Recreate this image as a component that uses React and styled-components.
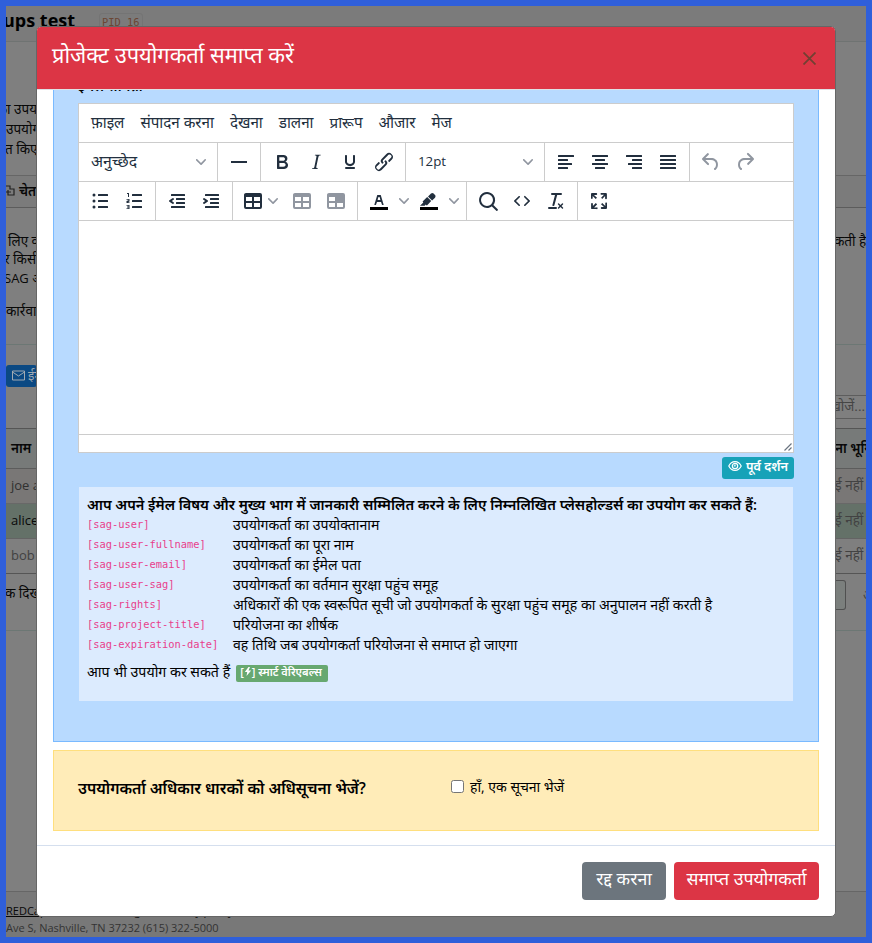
import React from "react";
import styled, { createGlobalStyle } from "styled-components";

const Global = createGlobalStyle`
  * { box-sizing: border-box; }
  svg { flex: none; }
  body { margin: 0; font-family: "Open Sans", "Noto Sans", "Noto Sans Devanagari", sans-serif; font-size: 13px; color: #000; }
`;

const Screen = styled.div`
  position: relative;
  width: 872px;
  height: 943px;
  border: 6px solid #2f5fda;
  background: #7f7f7f;
  overflow: hidden;
`;

/* ---------- page behind the dialog ---------- */
const Page = styled.div`
  display: flex;
  flex-direction: column;
  height: 931px;
`;
const Band = styled.div`
  display: flex;
  flex: none;
  justify-content: space-between;
  align-items: ${(p) => p.$align || "center"};
  height: ${(p) => p.$h}px;
  background: ${(p) => p.$bg || "transparent"};
  border-bottom: ${(p) => (p.$line ? `1px solid ${p.$line}` : "0")};
  white-space: nowrap;
`;
const Clip = styled.div`
  display: flex;
  justify-content: ${(p) => (p.$end ? "flex-end" : "flex-start")};
  align-items: center;
  gap: 4px;
  width: 31px;
  height: 100%;
  padding-left: ${(p) => p.$pad || 0}px;
  padding-bottom: ${(p) => p.$lift || 0}px;
  overflow: hidden;
  text-indent: ${(p) => p.$indent || 0}px;
  color: ${(p) => p.$color || "#080808"};
  font-size: ${(p) => p.$size || 13.5}px;
  font-weight: ${(p) => (p.$bold ? 600 : 400)};
`;
const PageTitle = styled.div`
  display: flex;
  align-items: center;
  gap: 24px;
  margin-left: -3px;
  font-size: 18px;
  font-weight: 700;
  line-height: 29px;
`;
const Pid = styled.span`
  margin-top: 3px;
  padding: 0 2px;
  border: 1px solid #747474;
  border-radius: 3px;
  color: #6b4634;
  font: 10.4px/16px "DejaVu Sans Mono", monospace;
`;
const MailButton = styled.div`
  display: flex;
  align-items: center;
  gap: 3px;
  width: 31px;
  height: 22px;
  padding: 0 0 2px 6px;
  overflow: hidden;
  border-radius: 3px;
  background: #0b4983;
  color: #a1aab2;
  font-size: 13px;
`;
const SearchBox = styled.div`
  display: flex;
  justify-content: flex-end;
  align-items: center;
  width: 31px;
  height: 24px;
  padding: 0 1px 3px 0;
  overflow: hidden;
  border: 1px solid #5d5d5d;
  border-width: 1px 0;
  color: #454545;
  font-size: 13.5px;
`;
const PagerCell = styled.div`
  flex: none;
  width: 11px;
  height: 30px;
  margin-right: 13px;
  border: 1px solid #505050;
  border-left: 0;
  border-radius: 0 3px 3px 0;
  background: #7b7f7d;
`;
const PageFooter = styled.div`
  flex: 1;
  padding-top: 10px;
  border-top: 1px solid #666;
  background: #787878;
  font-size: 11px;
  line-height: 17px;
  color: #333;
`;
const FooterLinks = styled.div`
  display: flex;
  gap: 18px;
  color: #080808;
  text-decoration: underline;
  white-space: nowrap;
`;

/* ---------- dialog ---------- */
const Dialog = styled.div`
  position: absolute;
  left: 30px;
  top: 20px;
  width: 800px;
  height: 891px;
  display: flex;
  flex-direction: column;
  border: 1px solid #666;
  border-radius: 5px;
  background: #fff;
  overflow: hidden;
`;
const DialogHeader = styled.div`
  display: flex;
  flex: none;
  justify-content: space-between;
  align-items: center;
  height: 63px;
  padding: 0 19px 0 15px;
  border-bottom: 1px solid #dee2e6;
  background: #dc3545;
  color: #fff;
`;
const DialogTitle = styled.div`
  margin-top: -7px;
  font-size: 21.8px;
  line-height: 30px;
`;
const DialogBody = styled.div`
  flex: none;
  height: 755px;
  padding: 0 16px;
  overflow: hidden;
`;
const BluePanel = styled.div`
  height: 652px;
  padding: 0 25px 0 24px;
  border: 1px solid #7abaff;
  border-top: 0;
  background: #b8daff;
`;
const CutLabel = styled.div`
  height: 13px;
  overflow: hidden;
  font-weight: 600;
  line-height: 20px;
`;
const CutLabelText = styled.div`
  margin-top: -14px;
  font-size: 14px;
`;
const Editor = styled.div`
  display: flex;
  flex-direction: column;
  width: 716px;
  height: 350px;
  border: 1px solid #ccc;
  background: #fff;
  color: #222f3e;
`;
const MenuBar = styled.div`
  display: flex;
  flex: none;
  align-items: center;
  gap: 16px;
  height: 38px;
  padding: 0 0 3px 12px;
  font-size: 15.2px;
`;
const ToolRow = styled.div`
  display: flex;
  flex: none;
  height: 39px;
  border-top: 1px solid #ccc;
`;
const ToolGroup = styled.div`
  display: flex;
  align-items: center;
  padding: 0 4px;
  border-right: ${(p) => (p.$last ? 0 : 1)}px solid #ccc;
`;
const ToolButton = styled.div`
  display: flex;
  align-items: center;
  justify-content: center;
  width: ${(p) => p.$w || 34}px;
  height: 34px;
  color: ${(p) => (p.$off ? "#9096a0" : "#222f3e")};
`;
const SplitButton = styled(ToolButton)`
  justify-content: flex-start;
  gap: 3px;
  width: 48px;
  padding-left: 4px;
`;
const Select = styled.div`
  display: flex;
  align-items: center;
  justify-content: space-between;
  width: 130px;
  padding: 0 7px 0 8px;
  font-size: ${(p) => p.$size}px;
  span { margin-top: -2px; }
`;
const EditArea = styled.div`
  flex: 1;
  border-top: 1px solid #ccc;
`;
const StatusBar = styled.div`
  display: flex;
  justify-content: flex-end;
  align-items: flex-end;
  height: 18px;
  border-top: 1px solid #ccc;
  color: #6a7480;
`;
const PreviewRow = styled.div`
  display: flex;
  justify-content: flex-end;
  width: 716px;
  height: 34px;
  padding-top: 4px;
`;
const PreviewButton = styled.div`
  display: flex;
  justify-content: center;
  gap: 4px;
  width: 72px;
  height: 22px;
  border-radius: 3px;
  background: #17a2b8;
  color: #fff;
  font-size: 12.7px;
  font-weight: 600;
  line-height: 18px;
  white-space: nowrap;
  svg { margin-top: 3px; }
`;
const HintBox = styled.div`
  width: 714px;
  height: 214px;
  margin-left: 1px;
  padding: 8px 8px;
  background: #dcebfe;
  white-space: nowrap;
`;
const HintTitle = styled.div`
  font-size: 14.47px;
  font-weight: 600;
  line-height: 20px;
`;
const HintRow = styled.div`
  display: grid;
  grid-template-columns: 146px 1fr;
  height: 20px;
  line-height: 20px;
  font-size: 14.08px;
`;
const Code = styled.span`
  color: #e83e8c;
  font: 10.4px/19px "DejaVu Sans Mono", monospace;
`;
const SmartRow = styled.div`
  display: flex;
  align-items: center;
  gap: 6px;
  height: 20px;
  margin-top: 6px;
  font-size: 14.2px;
`;
const SmartBadge = styled.span`
  display: flex;
  align-items: center;
  width: 92px;
  height: 17px;
  margin-top: 4px;
  padding: 0 4px 3px;
  border-radius: 2px;
  background: #67a870;
  color: #fff;
  font-size: 11px;
  font-weight: 600;
  white-space: nowrap;
`;
const YellowPanel = styled.div`
  display: flex;
  align-items: center;
  height: 81px;
  margin-top: 8px;
  padding: 0 24px 8px;
  border: 1px solid #ffdf7e;
  background: #ffecb8;
  font-size: 14px;
  white-space: nowrap;
`;
const Question = styled.div`
  width: 373px;
  padding-top: 2px;
  font-size: 15.6px;
  font-weight: 600;
`;
const Check = styled.span`
  width: 13px;
  height: 13px;
  margin-right: 6px;
  border: 1px solid #767676;
  border-radius: 2.5px;
  background: #fff;
`;
const DialogFooter = styled.div`
  display: flex;
  flex: 1;
  justify-content: flex-end;
  gap: 8px;
  padding: 16px;
  border-top: 1px solid #d5dfee;
`;
const Action = styled.div`
  display: flex;
  justify-content: center;
  width: ${(p) => p.$w}px;
  height: 38px;
  border-radius: 4px;
  background: ${(p) => p.$bg};
  color: #fff;
  font-size: 17.7px;
  line-height: 33px;
  white-space: nowrap;
`;

/* ---------- icons ---------- */
const bar = (x, y, w) => `M${x + 0.5} ${y}h${w - 1}a.5.5 0 01.5.5v1a.5.5 0 01-.5.5h-${w - 1}a.5.5 0 01-.5-.5v-1a.5.5 0 01.5-.5z`;
const icons = {
  rule: "M4 11h16v2H4z",
  bold: "M7.8 19c-.3 0-.5 0-.6-.2l-.2-.5V5.7c0-.2 0-.4.2-.5l.6-.2h5c1.5 0 2.7.3 3.5 1 .7.6 1.1 1.4 1.1 2.5a3 3 0 01-.6 1.9c-.4.6-1 1-1.6 1.2.4.1.9.3 1.3.6s.8.7 1 1.2c.4.4.5 1 .5 1.6 0 1.3-.4 2.3-1.3 3-.8.7-2.1 1-3.8 1H7.8zm5-8.3c.6 0 1.2-.1 1.6-.5.4-.3.6-.7.6-1.3 0-1.1-.8-1.7-2.3-1.7H9.3v3.5h3.4zm.5 6c.7 0 1.3-.1 1.7-.4.4-.4.6-.9.6-1.5s-.2-1-.7-1.4c-.4-.3-1-.4-2-.4H9.4v3.8h4z",
  italic: "M16.7 4.7l-.1.9h-.3c-.6 0-1 0-1.4.3-.3.3-.4.6-.5 1.1l-2.1 9.8v.6c0 .5.4.8 1.4.8h.2l-.2.8H8l.2-.8h.2c1.1 0 1.8-.5 2-1.5l2-9.8.1-.5c0-.6-.4-.8-1.4-.8h-.3l.2-.9h5.8z",
  underline: "M16 5c.6 0 1 .4 1 1v5.5a4 4 0 01-.4 1.8l-1 1.4a5.3 5.3 0 01-5.5 1 5 5 0 01-1.6-1c-.5-.4-.8-.9-1.1-1.4a4 4 0 01-.4-1.8V6c0-.6.4-1 1-1s1 .4 1 1v5.5c0 .3 0 .6.2 1l.6.7a3.3 3.3 0 002.2.8 3.4 3.4 0 002.2-.8c.3-.2.4-.5.6-.8l.2-.9V6c0-.6.4-1 1-1zM8 17h8c.6 0 1 .4 1 1s-.4 1-1 1H8a1 1 0 010-2z",
  link: "M6.2 12.3a1 1 0 011.4 1.4l-2.1 2a2 2 0 102.7 2.8l4.8-4.8a1 1 0 000-1.4 1 1 0 111.4-1.3 2.9 2.9 0 010 4L9.6 20a3.9 3.9 0 01-5.5-5.5l2-2zm11.6-.6a1 1 0 01-1.4-1.4l2-2a2 2 0 10-2.6-2.8L11 10.3a1 1 0 000 1.4A1 1 0 119.6 13a2.9 2.9 0 010-4L14.4 4a3.9 3.9 0 015.5 5.5l-2 2z",
  left: bar(4, 5, 16) + bar(4, 9, 10) + bar(4, 13, 14) + bar(4, 17, 10),
  center: bar(4, 5, 16) + bar(7, 9, 10) + bar(4, 13, 16) + bar(7, 17, 10),
  right: bar(4, 5, 16) + bar(10, 9, 10) + bar(6, 13, 14) + bar(10, 17, 10),
  justify: bar(4, 5, 16) + bar(4, 9, 16) + bar(4, 13, 16) + bar(4, 17, 16),
  undo: "M6.4 8H12c3.7 0 6.2 2 6.8 5.1.6 2.7-.4 5.6-2.3 6.8a1 1 0 01-1-1.8c1.1-.6 1.8-2.7 1.4-4.6-.5-2.1-2.1-3.5-4.9-3.5H6.4l3.3 3.3a1 1 0 11-1.4 1.4l-5-5a1 1 0 010-1.4l5-5a1 1 0 011.4 1.4L6.4 8z",
  redo: "M17.6 10H12c-2.8 0-4.4 1.4-4.9 3.5-.4 2 .3 4 1.4 4.6a1 1 0 11-1 1.8c-2-1.2-2.9-4.1-2.3-6.8.6-3 3-5.1 6.8-5.1h5.6l-3.3-3.3a1 1 0 111.4-1.4l5 5a1 1 0 010 1.4l-5 5a1 1 0 01-1.4-1.4l3.3-3.3z",
  bullets: bar(10, 5, 10) + bar(10, 11, 10) + bar(10, 17, 10) + "M4.5 6a1.5 1.5 0 103 0 1.5 1.5 0 10-3 0zM4.5 12a1.5 1.5 0 103 0 1.5 1.5 0 10-3 0zM4.5 18a1.5 1.5 0 103 0 1.5 1.5 0 10-3 0z",
  numbers: bar(10, 5, 10) + bar(10, 11, 10) + bar(10, 17, 10) + "M5 4h2v4H6V5H5zM4.5 10h3v2.4l-1.6.8h1.6v.8h-3v-1.9l2-.8v-.5h-2zM4.5 16h3v4h-3v-.8h2v-.8h-1.5v-.8h1.5v-.8h-2z",
  outdent: bar(6, 5, 14) + bar(11, 9, 9) + bar(11, 13, 9) + bar(6, 17, 14) + "M8.6 13.2a1 1 0 01-1.2 1.6l-3-2a1 1 0 010-1.6l3-2a1 1 0 011.2 1.6L6.8 12l1.8 1.2z",
  indent: bar(6, 5, 14) + bar(11, 9, 9) + bar(11, 13, 9) + bar(6, 17, 14) + "M4.4 13.2a1 1 0 001.2 1.6l3-2a1 1 0 000-1.6l-3-2a1 1 0 00-1.2 1.6L6.2 12l-1.8 1.2z",
  table: "M19 4a2 2 0 012 2v12a2 2 0 01-2 2H5a2 2 0 01-2-2V6c0-1.1.9-2 2-2h14zM5 14v4h6v-4H5zm14 0h-6v4h6v-4zm0-6h-6v4h6V8zM5 12h6V8H5v4z",
  cell: "M19 4a2 2 0 012 2v12a2 2 0 01-2 2H5a2 2 0 01-2-2V6c0-1.1.9-2 2-2h14zM5 14v4h6v-4H5zm14 0h-6v4h6v-4zM5 8v4h6V8H5z",
  search: "M16 17.3a8 8 0 111.4-1.4l4.3 4.4a1 1 0 01-1.4 1.4l-4.4-4.3zm-5-.3a6 6 0 100-12 6 6 0 000 12z",
  source: "M9.8 15.7c.3.3.3.8 0 1-.3.4-.9.4-1.2 0l-4.4-4.1a.8.8 0 010-1.2l4.4-4.2c.3-.3.9-.3 1.2 0 .3.3.3.8 0 1.1L6 12l3.8 3.7zM14.2 15.7c-.3.3-.3.8 0 1 .4.4.9.4 1.2 0l4.4-4.1c.3-.3.3-.9 0-1.2l-4.4-4.2a.8.8 0 00-1.2 0c-.3.3-.3.8 0 1.1L18 12l-3.8 3.7z",
  clear: "M13.2 6l-2.8 10.2a1 1 0 01-1 .8h-.2a.8.8 0 01-.8-1L11 6H8a1 1 0 110-2h9a1 1 0 010 2h-3.8zM5 18h7a1 1 0 010 2H5a1 1 0 010-2zm13 1.5L16.5 18 15 19.5a.7.7 0 01-1-1l1.5-1.5-1.5-1.5a.7.7 0 011-1l1.5 1.5 1.5-1.5a.7.7 0 011 1L17.5 17l1.5 1.5a.7.7 0 01-1 1z",
  full: "M15.3 10l-1.2-1.3 2.9-3h-2.3a.9.9 0 110-1.7H19c.5 0 .9.4.9.9v4.4a.9.9 0 11-1.8 0V7l-2.9 3zm0 4l3 3v-2.3a.9.9 0 111.7 0V19c0 .5-.4.9-.9.9h-4.4a.9.9 0 110-1.8H17l-3-2.9 1.3-1.2zM10 15.4l-2.9 3h2.3a.9.9 0 110 1.7H5a.9.9 0 01-.9-.9v-4.4a.9.9 0 111.8 0V17l2.9-3 1.2 1.3zM8.7 10L5.7 7v2.3a.9.9 0 01-1.7 0V5c0-.5.4-.9.9-.9h4.4a.9.9 0 010 1.8H7l3 2.9-1.3 1.2z",
  textColor: "M8.7 16h-.8a.5.5 0 01-.5-.6l2.7-9c.1-.3.3-.4.5-.4h2.8c.2 0 .4.1.5.4l2.7 9a.5.5 0 01-.5.6h-.8a.5.5 0 01-.4-.4l-.7-2.2c0-.3-.3-.4-.5-.4h-3.4c-.2 0-.4.1-.5.4l-.7 2.2c0 .3-.2.4-.4.4zm2.6-7.6l-.6 2a.5.5 0 00.5.6h1.6a.5.5 0 00.5-.6l-.6-2c0-.3-.3-.4-.5-.4h-.4c-.2 0-.4.1-.5.4z",
  highlight: "M7.7 16.7H3l3.3-3.3-.7-.8L10.2 8l4 4.1-4 4.2c-.2.2-.6.2-.8 0l-.6-.7-1.1 1.1zm5-7.5L11 7.4l3-2.9a2 2 0 012.6 0L18 6c.7.7.7 2 0 2.7l-2.9 2.9-1.8-1.8-.5-.6z",
};

const Icon = ({ name, swatch }) => (
  <svg width="24" height="24" viewBox="0 0 24 24" fill="currentColor" fillRule="evenodd">
    <path d={icons[name]} />
    {swatch && <path d="M3 18h18v3H3z" fill="#000" />}
  </svg>
);
const Chevron = () => (
  <svg width="10" height="10" viewBox="0 0 10 10" fill="#9096a0">
    <path d="M8.7 2.2c.3-.3.8-.3 1 0 .4.4.4.9 0 1.2L5.7 7.8c-.3.3-.9.3-1.2 0L.2 3.4a.8.8 0 010-1.2c.3-.3.8-.3 1.1 0L5 6l3.7-3.8z" />
  </svg>
);
const Tool = ({ name, off }) => (
  <ToolButton $off={off}><Icon name={name} /></ToolButton>
);
const ColorTool = ({ name }) => (
  <>
    <ToolButton><Icon name={name} swatch /></ToolButton>
    <ToolButton $w={16}><Chevron /></ToolButton>
  </>
);

const menus = ["फ़ाइल", "संपादन करना", "देखना", "डालना", "प्रारूप", "औजार", "मेज"];
const placeholders = [
  ["[sag-user]", "उपयोगकर्ता का उपयोक्तानाम"],
  ["[sag-user-fullname]", "उपयोगकर्ता का पूरा नाम"],
  ["[sag-user-email]", "उपयोगकर्ता का ईमेल पता"],
  ["[sag-user-sag]", "उपयोगकर्ता का वर्तमान सुरक्षा पहुंच समूह"],
  ["[sag-rights]", "अधिकारों की एक स्वरूपित सूची जो उपयोगकर्ता के सुरक्षा पहुंच समूह का अनुपालन नहीं करती है"],
  ["[sag-project-title]", "परियोजना का शीर्षक"],
  ["[sag-expiration-date]", "वह तिथि जब उपयोगकर्ता परियोजना से समाप्त हो जाएगा"],
];

const Backdrop = () => (
  <Page>
    <Band $h={36} $line="#6f7372" $bg="#7b7b7b" $align="flex-start">
      <PageTitle>ups test <Pid>PID 16</Pid></PageTitle>
    </Band>
    <Band $h={57} />
    <Band $h={20}><Clip $end>का उपय</Clip></Band>
    <Band $h={20}><Clip>उपयोग</Clip></Band>
    <Band $h={20}><Clip $indent={-1}>त किए</Clip></Band>
    <Band $h={17} $line="#666" />
    <Band $h={32} $line="#5c5c5c" $bg="#7b7b7b">
      <Clip $bold $lift={2}>
        <svg width="9" height="13" viewBox="0 0 9 13" fill="none" stroke="#222" strokeWidth="1.2"><path d="M0 2h4v3h4v6H2V6M0 8h5" /></svg>
        चेतावनी
      </Clip>
    </Band>
    <Band $h={23} />
    <Band $h={19}><Clip $pad={2}>लिए क</Clip><Clip $indent={-1}>कती है</Clip></Band>
    <Band $h={18}><Clip $indent={-2}>र किसी</Clip></Band>
    <Band $h={19}><Clip $indent={-2} $size={13}>SAG अ</Clip></Band>
    <Band $h={15} />
    <Band $h={18}><Clip>कार्रवाई</Clip></Band>
    <Band $h={25} $line="#6c7774" />
    <Band $h={20} />
    <Band $h={22}>
      <MailButton>
        <svg width="13" height="11" viewBox="0 0 13 11" fill="none" stroke="currentColor"><path d="M.5 1h12v9H.5zM.5 2l6 4 6-4" /></svg>
        ईमेल
      </MailButton>
    </Band>
    <Band $h={7} />
    <Band $h={25} $align="flex-end"><Clip /><SearchBox>खोजें...</SearchBox></Band>
    <Band $h={10} $line="#555" />
    <Band $h={40} $line="#5c5c5c" $bg="#777a79"><Clip $pad={5} $bold $lift={2}>नाम</Clip><Clip $bold $lift={2}>ना भूमि</Clip></Band>
    <Band $h={35} $line="#686868" $bg="#797776"><Clip $pad={5} $lift={2} $size={13} $color="#303030">joe a</Clip><Clip $lift={2} $color="#424242">ई नहीं</Clip></Band>
    <Band $h={35} $line="#646464" $bg="#647168"><Clip $pad={5} $lift={2} $size={13}>alice</Clip><Clip $lift={2} $color="#424242">ई नहीं</Clip></Band>
    <Band $h={35} $line="#555"><Clip $pad={5} $lift={2} $size={13} $color="#424242">bob</Clip><Clip $lift={2} $color="#424242">ई नहीं</Clip></Band>
    <Band $h={42}><Clip $lift={4} $indent={-1}>क दिखा</Clip><Clip $color="#424242"><PagerCell />अ</Clip></Band>
    <Band $h={15} $line="#6c7774" />
    <Band $h={260} />
    <PageFooter>
      <FooterLinks><span>REDCap</span><span>Terms</span><span>Usage</span><span>Privacy policy</span><span>About</span></FooterLinks>
      <div>Ave S, Nashville, TN 37232 (615) 322-5000</div>
    </PageFooter>
  </Page>
);

export default function App() {
  return (
    <Screen>
      <Global />
      <Backdrop />
      <Dialog>
        <DialogHeader>
          <DialogTitle>प्रोजेक्ट उपयोगकर्ता समाप्त करें</DialogTitle>
          <svg width="13" height="13" viewBox="0 0 13 13" stroke="#724032" strokeWidth="1.8"><path d="M.5.5l12 12M12.5.5l-12 12" /></svg>
        </DialogHeader>
        <DialogBody>
          <BluePanel>
            <CutLabel><CutLabelText>ईमेल सामग्री</CutLabelText></CutLabel>
            <Editor>
              <MenuBar>{menus.map((m) => <span key={m}>{m}</span>)}</MenuBar>
              <ToolRow>
                <ToolGroup><Select $size={15.8}><span>अनुच्छेद</span><Chevron /></Select></ToolGroup>
                <ToolGroup><Tool name="rule" /></ToolGroup>
                <ToolGroup><Tool name="bold" /><Tool name="italic" /><Tool name="underline" /><Tool name="link" /></ToolGroup>
                <ToolGroup><Select $size={13.3}><span>12pt</span><Chevron /></Select></ToolGroup>
                <ToolGroup><Tool name="left" /><Tool name="center" /><Tool name="right" /><Tool name="justify" /></ToolGroup>
                <ToolGroup $last><Tool name="undo" off /><Tool name="redo" off /></ToolGroup>
              </ToolRow>
              <ToolRow>
                <ToolGroup><Tool name="bullets" /><Tool name="numbers" /></ToolGroup>
                <ToolGroup><Tool name="outdent" /><Tool name="indent" /></ToolGroup>
                <ToolGroup>
                  <SplitButton><Icon name="table" /><Chevron /></SplitButton>
                  <Tool name="table" off /><Tool name="cell" off />
                </ToolGroup>
                <ToolGroup><ColorTool name="textColor" /><ColorTool name="highlight" /></ToolGroup>
                <ToolGroup><Tool name="search" /><Tool name="source" /><Tool name="clear" /></ToolGroup>
                <ToolGroup $last><Tool name="full" /></ToolGroup>
              </ToolRow>
              <EditArea />
              <StatusBar>
                <svg width="10" height="10" viewBox="0 0 10 10" fill="none" stroke="currentColor" strokeWidth="1.2"><path d="M1.5 8.5l7-7M5.5 8.5l3-3" /></svg>
              </StatusBar>
            </Editor>
            <PreviewRow>
              <PreviewButton>
                <svg width="14" height="12" viewBox="0 0 14 12" fill="none" stroke="currentColor" strokeWidth="1.2"><path d="M.8 6C3.5.2 10.5.2 13.2 6 10.5 11.8 3.5 11.8.8 6z" /><circle cx="7" cy="6" r="2.7" /><path d="M7 4.5v1.5H5.7" /></svg>
                पूर्व दर्शन
              </PreviewButton>
            </PreviewRow>
            <HintBox>
              <HintTitle>आप अपने ईमेल विषय और मुख्य भाग में जानकारी सम्मिलित करने के लिए निम्नलिखित प्लेसहोल्डर्स का उपयोग कर सकते हैं:</HintTitle>
              {placeholders.map(([code, text]) => (
                <HintRow key={code}><Code>{code}</Code><span>{text}</span></HintRow>
              ))}
              <SmartRow>
                <span>आप भी उपयोग कर सकते हैं</span>
                <SmartBadge>
                  [<svg width="8" height="9" viewBox="0 0 8 9" fill="currentColor"><path d="M4.5 0L.8 5h2.4L2.5 9 7.2 3.6H4.5L6 0z" /></svg>]&nbsp;स्मार्ट वेरिएबल्स
                </SmartBadge>
              </SmartRow>
            </HintBox>
          </BluePanel>
          <YellowPanel>
            <Question>उपयोगकर्ता अधिकार धारकों को अधिसूचना भेजें?</Question>
            <Check />
            <span>हाँ, एक सूचना भेजें</span>
          </YellowPanel>
        </DialogBody>
        <DialogFooter>
          <Action $w={84} $bg="#6c757d">रद्द करना</Action>
          <Action $w={145} $bg="#dc3545">समाप्त उपयोगकर्ता</Action>
        </DialogFooter>
      </Dialog>
    </Screen>
  );
}
